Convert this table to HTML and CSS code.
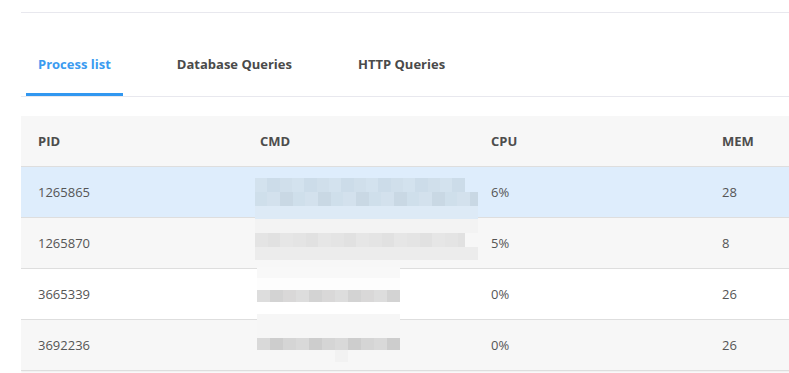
FILE: index.html
```html
<!DOCTYPE html>
<html>
<head>
<meta charset="utf-8">
<link rel="stylesheet" href="styles.css">
</head>
<body>
<div class="page">
  <div class="tabs">
    <div class="tab active">Process list</div>
    <div class="tab">Database Queries</div>
    <div class="tab">HTTP Queries</div>
  </div>
  <div class="table-wrap">
  <table class="grid">
    <thead>
      <tr><th class="c1">PID</th><th class="c2">CMD</th><th class="c3">CPU</th><th class="c4">MEM</th></tr>
    </thead>
    <tbody>
      <tr class="sel">
        <td>1265865</td>
        <td class="cmd"><div class="blur b1"><div class="s s1a"></div><div class="s s1b"></div><div class="s s1c"></div></div></td>
        <td>6%</td><td>28</td>
      </tr>
      <tr class="alt">
        <td>1265870</td>
        <td class="cmd"><div class="blur b2"><div class="s s2a"></div><div class="s s2b"></div><div class="s s2c"></div></div></td>
        <td>5%</td><td>8</td>
      </tr>
      <tr>
        <td>3665339</td>
        <td class="cmd"><div class="blur b3"><div class="s s3a"></div><div class="s s3b"></div><div class="s s3c"></div><div class="s s3d"></div></div></td>
        <td>0%</td><td>26</td>
      </tr>
      <tr class="alt">
        <td>3692236</td>
        <td class="cmd"><div class="blur b4"><div class="s s4a"></div><div class="s s4b"></div><div class="s s4c"></div></div></td>
        <td>0%</td><td>26</td>
      </tr>
    </tbody>
  </table>
  </div>
</div>
</body>
</html>
```
FILE: styles.css
```css
html, body {
  margin: 0;
  padding: 0;
  background: #fff;
  overflow: hidden;
}
body {
  font-family: "Open Sans", "Noto Sans", sans-serif;
  color: #555;
}
.page {
  padding: 12px 0 0 21px;
}
.tabs {
  display: flex;
  gap: 42px;
  padding-left: 5px;
  border-top: 1px solid #e8e8ee;
  border-bottom: 1px solid #e8e8ee;
  height: 83px;
  align-items: flex-end;
}
.tab {
  font-size: 13px;
  font-weight: 700;
  color: #4a4a4a;
  padding: 0 12px;
  height: 43px;
  line-height: 22px;
  box-sizing: border-box;
  border-bottom: 3px solid transparent;
}
.tab.active {
  color: #3b9bf0;
  border-bottom-color: #3197f0;
}
.table-wrap {
  margin-top: 19px;
  overflow: hidden;
  padding-bottom: 3px;
}
.grid {
  border-collapse: collapse;
  table-layout: fixed;
  width: 960px;
  font-size: 13px;
  box-shadow: 0 1px 2px rgba(0,0,0,0.08);
}
.grid th {
  background: #f7f7f7;
  text-align: left;
  font-weight: 700;
  color: #4d4d4d;
  height: 50px;
  padding: 0 0 0 17px;
  border-bottom: 1px solid #dedede;
}
.c1 { width: 205px; }
.c2 { width: 214px; }
.c3 { width: 214px; }
.grid td {
  height: 50px;
  padding: 0 0 0 17px;
  border-bottom: 1px solid #dedede;
  background: #fff;
}
.grid tr.alt td { background: #f7f7f7; }
.grid tr.sel td { background: #deedfc; }
.grid td.cmd {
  padding: 0 0 0 12px;
  vertical-align: top;
}
.blur {
  display: flex;
  flex-direction: column;
}
.s { height: 14px; flex: none; }
.b1 { width: 223px; height: 42px; margin: 11px 0 -3px; }
.s1a { background: repeating-linear-gradient(90deg, #d3e2ee 0 12px, #ccdce9 12px 25px, #d0dfeb 25px 37px); width: 210px; }
.s1b { background: repeating-linear-gradient(90deg, #cfdfeb 0 12px, #d3e1ed 12px 25px, #c9d8e4 25px 38px); }
.s1c { background: #ddeaf6; }
.b2 { width: 223px; height: 41px; margin: 1px 0 8px; }
.s2a { background: #f3f3f3; }
.s2b { background: repeating-linear-gradient(90deg, #e4e4e4 0 13px, #e1e1e1 13px 25px, #e6e6e6 25px 38px); width: 210px; }
.s2c { height: 13px; background: #ececec; }
.b3 { width: 143px; height: 51px; margin: -2px 0 1px 2px; }
.s3a { height: 11px; background: #f8f8f8; }
.s3b { height: 12px; background: #fdfdfd; }
.s3c { height: 12px; background: repeating-linear-gradient(90deg, #dddddd 0 13px, #d3d3d3 13px 26px, #d9d8d8 26px 39px); }
.s3d { height: 16px; background: #fff; }
.b4 { width: 143px; height: 48px; margin: -6px 0 8px 2px; }
.s4a { height: 24px; background: #f6f6f6; }
.s4b { height: 12px; background: repeating-linear-gradient(90deg, #d9d9d9 0 13px, #cdcdcd 13px 26px, #d5d5d5 26px 39px); }
.s4c { height: 12px; width: 13px; margin-left: 78px; background: #f2f2f2; }
```
